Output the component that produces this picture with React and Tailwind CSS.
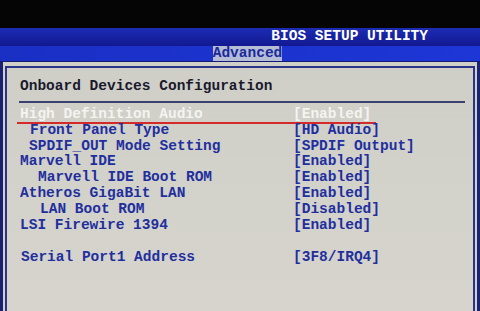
import React from "react";

const rows = [
  { label: "High Definition Audio", value: "[Enabled]", indent: "pl-0", active: true },
  { label: "Front Panel Type", value: "[HD Audio]", indent: "pl-[10px]" },
  { label: "SPDIF_OUT Mode Setting", value: "[SPDIF Output]", indent: "pl-[9px]" },
  { label: "Marvell IDE", value: "[Enabled]", indent: "pl-0" },
  { label: "Marvell IDE Boot ROM", value: "[Enabled]", indent: "pl-[18px]" },
  { label: "Atheros GigaBit LAN", value: "[Enabled]", indent: "pl-0" },
  { label: "LAN Boot ROM", value: "[Disabled]", indent: "pl-[20px]" },
  { label: "LSI Firewire 1394", value: "[Enabled]", indent: "pl-0" },
  { label: "", value: "", indent: "pl-0" },
  { label: "Serial Port1 Address", value: "[3F8/IRQ4]", indent: "pl-px" },
];

function Row({ label, value, indent, active }) {
  const color = active ? "text-[#f4f4f0]" : "text-[#1f2f9e]";
  return (
    <div className="relative flex h-[15.9px] items-center leading-[15.9px]">
      <div className={`w-[273px] shrink-0 ${indent} ${color}`}>{label}</div>
      <div className={color}>{value}</div>
      {active && (
        <div className="absolute left-[-3px] top-[15px] h-[2px] w-[359px] bg-[#d42a2a]" />
      )}
    </div>
  );
}

export default function App() {
  return (
    <div
      className="flex h-[311px] w-[480px] flex-col overflow-hidden bg-black font-bold"
      style={{ fontFamily: '"Liberation Mono", "DejaVu Sans Mono", monospace' }}
    >
      <div className="h-[28px] shrink-0 bg-[#050505]" />
      <div className="flex h-[18px] shrink-0 items-center justify-end bg-gradient-to-b from-[#1d2cb4] to-[#121890] pr-[52px] text-[14.5px] text-white">
        BIOS SETUP UTILITY
      </div>
      <div className="flex h-[15px] shrink-0 items-stretch bg-gradient-to-r from-[#1a2fc4] to-[#1d36d6]">
        <div className="ml-[213px] flex w-[69px] items-center justify-center bg-[#b4bcd6] text-[14.5px] text-[#1b2a9a]">
          Advanced
        </div>
      </div>
      <div className="h-[1px] shrink-0 bg-[#141a70]" />
      <div className="flex flex-1 flex-col border-l-[3px] border-r-[3px] border-l-[#1a2070] border-r-[#1a2470] bg-[#d0d0c9] pl-[2px] pr-[2px] pt-[4px]">
        <div className="flex flex-1 flex-col border-l-2 border-r-2 border-t-2 border-[#2c3488] bg-gradient-to-b from-[#cfcfc8] to-[#d6d4cd] pl-[13px] pr-[8px] text-[14.5px]">
          <div className="pt-[8px] pb-[3px] text-[#1a1a2c]">Onboard Devices Configuration</div>
          <div className="ml-[-1px] h-[2px] bg-[#3a4070]" />
          <div className="pt-[4px]">
            {rows.map((r, i) => (
              <Row key={i} {...r} />
            ))}
          </div>
        </div>
      </div>
    </div>
  );
}
